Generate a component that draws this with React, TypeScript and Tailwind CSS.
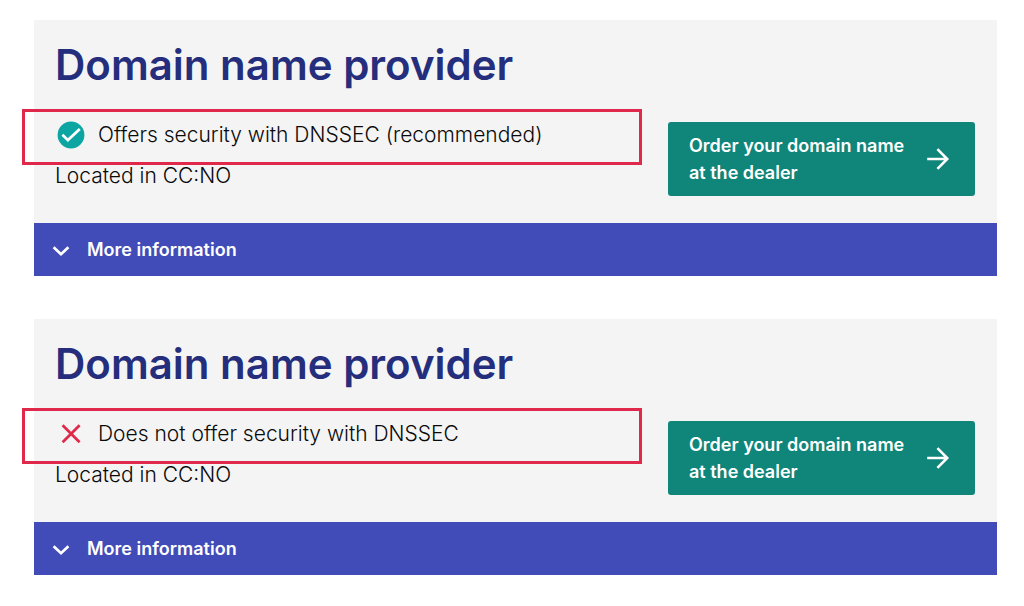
type ProviderProps = { id: string; secure: boolean; status: string };

function CheckIcon() {
  return (
    <svg viewBox="0 0 28 28" className="size-7 shrink-0" aria-hidden="true">
      <circle cx="14" cy="14" r="13.4" fill="#0ca5a2" />
      <path d="M5.4 13.8l5.5 5.3L22.8 7.9" fill="none" stroke="#fff" strokeWidth="2.7" />
    </svg>
  );
}

function CrossIcon() {
  return (
    <svg viewBox="0 0 28 28" className="size-7 shrink-0" aria-hidden="true">
      <path d="M5.6 5.2l17 17M22.6 5.2l-17 17" fill="none" stroke="#e0294a" strokeWidth="2.7" />
    </svg>
  );
}

function ArrowIcon() {
  return (
    <svg viewBox="0 0 24 24" className="size-6 shrink-0" aria-hidden="true">
      <path d="M1.2 12h20.4M11.4 2.2l9.8 9.8-9.8 9.8" fill="none" stroke="#fff" strokeWidth="2.6" />
    </svg>
  );
}

function ChevronIcon() {
  return (
    <svg viewBox="0 0 18 18" className="size-[18px] shrink-0" aria-hidden="true">
      <path d="M1.6 6.2L9 13.2l7.4-7" fill="none" stroke="#fff" strokeWidth="2.7" />
    </svg>
  );
}

function ProviderCard({ id, secure, status }: ProviderProps) {
  return (
    <section aria-labelledby={id} className="bg-[#f4f4f4]">
      <div className="flex items-end gap-[26px] pt-5 pr-[22px] pb-[27px] pl-[21px]">
        <div className="min-w-0 flex-1 pb-[9px]">
          <h2 id={id} className="text-[42px] leading-[50px] font-semibold text-[#242e7c]">
            Domain name provider
          </h2>
          <div className="mt-[19px] -ml-[33px] flex h-14 items-center gap-[13px] border-3 border-[#e0294a] pb-1 pl-8">
            {secure ? <CheckIcon /> : <CrossIcon />}
            <p className="text-[21px] leading-[26px] font-light">{status}</p>
          </div>
          <p className="text-[21px] leading-[22px] font-light">Located in CC:NO</p>
        </div>
        <a
          href="#order"
          className="flex w-[307px] shrink-0 items-center justify-between rounded-[3px] bg-[#10857a] py-2.5 pr-[25px] pl-[21px] text-lg leading-[27px] font-semibold text-white"
        >
          <span>
            Order your domain name
            <br />
            at the dealer
          </span>
          <ArrowIcon />
        </a>
      </div>
      <button
        type="button"
        className="flex h-[53px] w-full items-center gap-[17px] bg-[#414cb9] px-[18px] text-lg leading-[27px] font-semibold text-white"
      >
        <ChevronIcon />
        More information
      </button>
    </section>
  );
}

export default function App() {
  return (
    <main className="flex min-h-screen flex-col gap-[43px] bg-white pt-5 pr-[27px] pb-[30px] pl-[34px] font-['Inter',sans-serif] text-[#0a0a0a]">
      <ProviderCard id="provider-secure" secure status="Offers security with DNSSEC (recommended)" />
      <ProviderCard id="provider-insecure" secure={false} status="Does not offer security with DNSSEC" />
    </main>
  );
}
